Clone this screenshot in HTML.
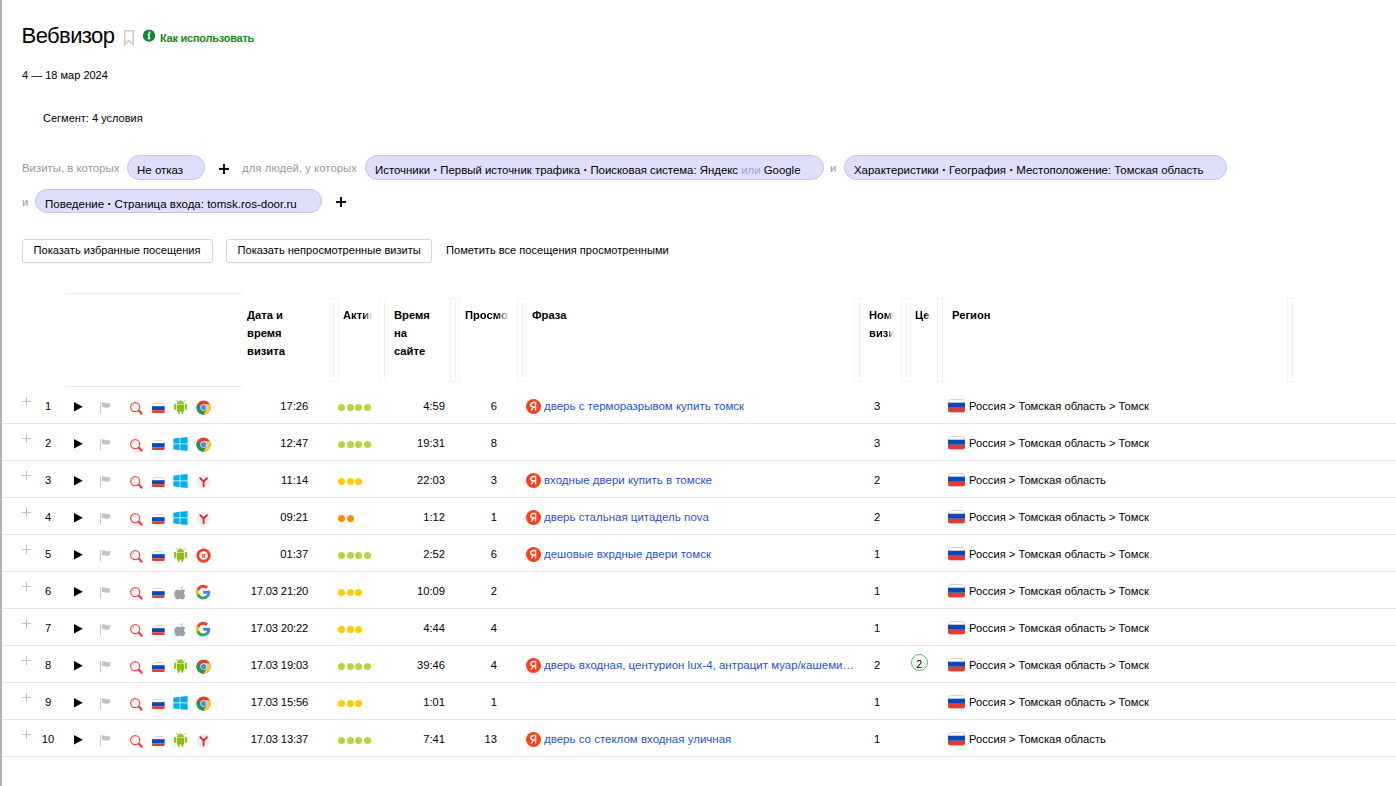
<!DOCTYPE html><html><head><meta charset="utf-8"><title>Вебвизор</title><style>
*{box-sizing:border-box}
html,body{margin:0;padding:0;background:#fff;width:1396px;height:786px;overflow:hidden;font-family:"Liberation Sans",sans-serif;color:#000}
.a{position:absolute;white-space:nowrap}
.lb{position:absolute;left:0;top:0;width:2px;height:786px;background:#b4b4b4}
.t{font-size:11px;line-height:14px}
.gray{color:#999}
.pill{position:absolute;height:25px;border-radius:13px;background:#dfdffc;border:1px solid #c3c3ec;font-size:11.5px;line-height:28.5px;padding-left:9px;white-space:nowrap;color:#000}
.plus{position:absolute;width:10px;height:10px}
.plus:before{content:"";position:absolute;left:0;top:4px;width:10px;height:2px;background:#111}
.plus:after{content:"";position:absolute;left:4px;top:0;width:2px;height:10px;background:#111}
.btn{position:absolute;height:24px;border:1px solid #d4d4d4;border-radius:3px;background:#fff;font-size:11.1px;line-height:21px;padding-left:10.5px;white-space:nowrap;box-shadow:0 1px 0 rgba(0,0,0,0.03)}
.hd{position:absolute;font-size:11.2px;font-weight:bold;line-height:18px;overflow:hidden}
.fade{-webkit-mask-image:linear-gradient(to right,#000 70%,transparent 100%);mask-image:linear-gradient(to right,#000 70%,transparent 100%)}
.rz{position:absolute;top:298px;width:10px;height:84px}
.rz .o{position:absolute;top:0;height:84px;width:1px;background:#f3f3f3}
.rz .h{position:absolute;height:1px;width:9px;background:#f3f3f3}
.rz .i{position:absolute;top:4px;left:5px;width:1px;height:76px;background:#ececec}
.hl{position:absolute;height:1px;background:#e6e6e6}
.c{position:absolute;font-size:11.2px;line-height:14px;white-space:nowrap}
.ic{position:absolute}
.ic svg{display:block}
.dot{position:absolute;width:7px;height:7px;border-radius:50%}
.b{font-size:8px;padding:0 0.6px;vertical-align:1.8px}
.ph{position:absolute;font-size:11.5px;line-height:14px;color:#1f52d4;white-space:nowrap;overflow:hidden;text-overflow:ellipsis}
</style></head><body>
<div class="lb"></div>
<div class="a" style="left:21.6px;top:24px;font-size:22px;line-height:24px;letter-spacing:-0.6px">Вебвизор</div>
<svg class="a" style="left:123px;top:29px" width="12" height="17" viewBox="0 0 12 17"><path d="M1.75 1.75 L10.25 1.75 L10.25 15.4 L6 11.6 L1.75 15.4 Z" fill="none" stroke="#cccccc" stroke-width="1.6" stroke-linejoin="miter"/></svg>
<svg class="a" style="left:142px;top:29px" width="14" height="14" viewBox="0 0 14 14"><circle cx="7" cy="6.6" r="6.2" fill="#0b8a32"/><circle cx="7.6" cy="3.5" r="1" fill="#fff"/><path d="M5.4 5.6 L7.5 5.3 L6.4 9.2 C6.2 10 6.9 10.1 8.3 8.9" stroke="#fff" stroke-width="1.5" fill="none" stroke-linejoin="round"/></svg>
<div class="a" style="left:160px;top:31px;font-size:11px;line-height:14px;font-weight:bold;color:#138a19;letter-spacing:-0.25px">Как использовать</div>
<div class="a t" style="left:22px;top:68px">4 — 18 мар 2024</div>
<div class="a t" style="left:43px;top:111px">Сегмент: 4 условия</div>
<div class="a gray" style="left:22px;top:161px;font-size:11.4px;line-height:14px">Визиты, в которых</div>
<div class="pill" style="left:127px;top:155px;width:78px">Не отказ</div>
<div class="plus" style="left:219px;top:164px"></div>
<div class="a gray" style="left:242px;top:161px;font-size:11.4px;line-height:14px">для людей, у которых</div>
<div class="pill" style="left:365px;top:155px;width:459px;font-size:11.4px">Источники <span class="b">•</span> Первый источник трафика <span class="b">•</span> Поисковая система: Яндекс <span style="color:#a3a3d6">или</span> Google</div>
<div class="a gray" style="left:830px;top:161px;font-size:11.4px;line-height:14px">и</div>
<div class="pill" style="left:844px;top:155px;width:383px;font-size:11.43px">Характеристики <span class="b">•</span> География <span class="b">•</span> Местоположение: Томская область</div>
<div class="a gray" style="left:22px;top:195px;font-size:11.4px;line-height:14px">и</div>
<div class="pill" style="left:35px;top:189px;width:287px;height:24px;line-height:27.5px">Поведение <span class="b">•</span> Страница входа: tomsk.ros-door.ru</div>
<div class="plus" style="left:336px;top:197px"></div>
<div class="btn" style="left:22px;top:239px;width:191px">Показать избранные посещения</div>
<div class="btn" style="left:226px;top:239px;width:206px">Показать непросмотренные визиты</div>
<div class="a" style="left:446px;top:243px;font-size:11.1px;line-height:14px">Пометить все посещения просмотренными</div>
<div class="hl" style="left:66px;top:293px;width:176px;background:#ebebeb"></div>
<div class="hl" style="left:66px;top:386px;width:176px;background:#e6e6e6"></div>
<div class="hd" style="left:247px;top:306px;width:80px">Дата и<br>время<br>визита</div>
<div class="hd fade" style="left:343px;top:306px;width:29px">Активность</div>
<div class="hd" style="left:394px;top:306px;width:55px">Время<br>на<br>сайте</div>
<div class="hd fade" style="left:465px;top:306px;width:45px">Просмотры</div>
<div class="hd" style="left:532px;top:306px;width:300px">Фраза</div>
<div class="hd fade" style="left:869px;top:306px;width:24.5px">Номер<br>визита</div>
<div class="hd fade" style="left:915px;top:306px;width:15.5px">Цели</div>
<div class="hd" style="left:952px;top:306px;width:300px">Регион</div>
<div class="rz" style="left:329px"><div class="o" style="left:9px"></div><div class="h" style="left:0;top:0"></div><div class="h" style="left:0;top:83px"></div><div class="i" style="left:4.4px"></div></div>
<div class="rz" style="left:379px"><div class="o" style="left:0"></div><div class="h" style="left:0;top:0"></div><div class="h" style="left:0;top:83px"></div><div class="i" style="left:5px"></div></div>
<div class="rz" style="left:450px"><div class="o" style="left:0"></div><div class="o" style="left:9px"></div><div class="h" style="left:0;top:0"></div><div class="h" style="left:0;top:83px"></div><div class="i" style="left:5px"></div></div>
<div class="rz" style="left:517px"><div class="o" style="left:0"></div><div class="h" style="left:0;top:0"></div><div class="h" style="left:0;top:83px"></div><div class="i" style="left:5px"></div></div>
<div class="rz" style="left:854px"><div class="o" style="left:0"></div><div class="h" style="left:0;top:0"></div><div class="h" style="left:0;top:83px"></div><div class="i" style="left:5px"></div></div>
<div class="rz" style="left:901px"><div class="o" style="left:0"></div><div class="o" style="left:9px"></div><div class="h" style="left:0;top:0"></div><div class="h" style="left:0;top:83px"></div><div class="i" style="left:5px"></div></div>
<div class="rz" style="left:937px"><div class="o" style="left:0"></div><div class="h" style="left:0;top:0"></div><div class="h" style="left:0;top:83px"></div><div class="i" style="left:5px"></div></div>
<div class="rz" style="left:1287px"><div class="o" style="left:0"></div><div class="h" style="left:0;top:0"></div><div class="h" style="left:0;top:83px"></div><div class="i" style="left:5px"></div></div>
<div class="hl" style="left:2px;top:423px;width:1394px"></div>
<svg class="ic" style="left:22px;top:397px" width="9" height="9" viewBox="0 0 9 9"><path d="M4.5 0 V9 M0 4.5 H9" stroke="#c2c2c2" stroke-width="1"/></svg>
<div class="c" style="left:38px;top:399px;width:20px;text-align:center">1</div>
<svg class="ic" style="left:74px;top:402px" width="9" height="10" viewBox="0 0 9 10"><path d="M0 0 L8.8 4.7 L0 9.4 Z" fill="#000"/></svg>
<svg class="ic" style="left:100px;top:402px" width="11" height="12" viewBox="0 0 11 12"><path d="M0.5 0 V11.6" stroke="#c8c8c8" stroke-width="1"/><path d="M1.9 0.7 C3.2 -0.1 4.6 0.6 6.1 1.0 C7.6 1.4 8.6 0.9 10.2 0.9 V5.2 C8.6 5.2 7.6 6.2 6.1 5.8 C4.6 5.4 3.2 4.9 1.9 5.2 Z" fill="#c4c4c4"/></svg>
<div class="ic" style="left:129px;top:400.5px"><svg width="16" height="16" viewBox="0 0 16 16"><circle cx="6.2" cy="6.1" r="4.55" fill="none" stroke="#ff4040" stroke-width="1.2"/><path d="M3.6 5.3 C3.8 4.6 4.2 4.1 4.9 3.8" stroke="#ff6060" stroke-width="0.8" fill="none"/><path d="M10.3 10.2 L12.5 12.5" stroke="#ff4040" stroke-width="2.5" stroke-linecap="round"/></svg></div>
<div class="ic" style="left:152.1px;top:402.7px"><svg width="12.8" height="10.2" viewBox="0 0 12.8 10.2"><defs><clipPath id="fc12"><rect x="0" y="0" width="12.8" height="10.2" rx="2"/></clipPath></defs><g clip-path="url(#fc12)"><rect x="0" y="0" width="12.8" height="10.2" fill="#ffffff"/><rect x="0.5" y="0.5" width="11.8" height="9.2" rx="2" fill="none" stroke="#d6d6d6" stroke-width="1"/><rect x="0" y="3.2" width="12.8" height="4.1" fill="#0c47b7"/><rect x="0" y="7.3" width="12.8" height="2.8999999999999995" fill="#e53b30"/></g></svg></div>
<div class="ic" style="left:174px;top:400px"><svg width="14" height="15" viewBox="0 0 14 15"><path d="M2.2 0.3 L3.9 1.4 M11.8 0.3 L10.1 1.4" stroke="#9bcf3a" stroke-width="0.9"/><path d="M3 4.1 C3 1.9 4.8 0.6 6.5 0.6 C8.2 0.6 10 1.9 10 4.1 Z" fill="#8cc41a"/><rect x="3" y="4.6" width="7" height="7" rx="0.6" fill="#86c20c"/><rect x="0.1" y="3.8" width="2.2" height="6.2" rx="1" fill="#8cc41a"/><rect x="10.8" y="3.8" width="2.2" height="6.2" rx="1" fill="#8cc41a"/><rect x="3.8" y="10" width="1.8" height="4" rx="0.9" fill="#80c000"/><rect x="7.4" y="10" width="1.8" height="4" rx="0.9" fill="#80c000"/><circle cx="5" cy="2.6" r="0.45" fill="#d8f0b0"/><circle cx="8" cy="2.6" r="0.45" fill="#d8f0b0"/></svg></div>
<div class="ic" style="left:195.5px;top:399.5px"><svg width="15.2" height="15.2" viewBox="0 0 16 16"><circle cx="8" cy="8" r="7.5" fill="#db4437"/><path d="M8 4.55 L14.66 4.55 A7.5 7.5 0 0 1 7.66 15.49 L10.99 9.725 L8 8 Z" fill="#fdc837"/><path d="M10.99 9.725 L7.66 15.49 A7.5 7.5 0 0 1 1.68 3.955 L5.01 9.725 L8 8 Z" fill="#179c53"/><circle cx="8" cy="8" r="3.45" fill="#f4f4f4"/><circle cx="8" cy="8" r="2.75" fill="#4a8af4"/></svg></div>
<div class="c" style="left:230px;top:399px;width:78.2px;text-align:right;">17:26</div>
<div class="dot" style="left:338.0px;top:404px;background:#bfd23b"></div>
<div class="dot" style="left:346.6px;top:404px;background:#bfd23b"></div>
<div class="dot" style="left:355.2px;top:404px;background:#bfd23b"></div>
<div class="dot" style="left:363.8px;top:404px;background:#bfd23b"></div>
<div class="c" style="left:395px;top:399px;width:50px;text-align:right">4:59</div>
<div class="c" style="left:470px;top:399px;width:27px;text-align:right">6</div>
<div class="ic" style="left:526px;top:398.6px"><svg width="15" height="15" viewBox="0 0 15 15"><circle cx="7.5" cy="7.5" r="7.5" fill="#fc3f1d"/><path d="M9.55 11.5 V3.5 H7.7 C5.9 3.5 4.75 4.5 4.75 5.85 C4.75 7.2 5.8 7.95 7.4 7.95 H9.55 M7.4 7.95 L5.3 11.5" stroke="#fff" stroke-width="1.4" fill="none"/></svg></div>
<div class="ph" style="left:544px;top:399px">дверь с терморазрывом купить томск</div>
<div class="c" style="left:874px;top:399px">3</div>
<div class="ic" style="left:948px;top:399.2px"><svg width="17" height="13.6" viewBox="0 0 17 13.6"><defs><clipPath id="fc17"><rect x="0" y="0" width="17" height="13.6" rx="2.5"/></clipPath></defs><g clip-path="url(#fc17)"><rect x="0" y="0" width="17" height="13.6" fill="#ffffff"/><rect x="0.5" y="0.5" width="16" height="12.6" rx="2.5" fill="none" stroke="#d6d6d6" stroke-width="1"/><rect x="0" y="3.7" width="17" height="5.1000000000000005" fill="#0c47b7"/><rect x="0" y="8.8" width="17" height="4.799999999999999" fill="#e53b30"/></g></svg></div>
<div class="c" style="left:969px;top:399px">Россия &gt; Томская область &gt; Томск</div>
<div class="hl" style="left:2px;top:460px;width:1394px"></div>
<svg class="ic" style="left:22px;top:434px" width="9" height="9" viewBox="0 0 9 9"><path d="M4.5 0 V9 M0 4.5 H9" stroke="#c2c2c2" stroke-width="1"/></svg>
<div class="c" style="left:38px;top:436px;width:20px;text-align:center">2</div>
<svg class="ic" style="left:74px;top:439px" width="9" height="10" viewBox="0 0 9 10"><path d="M0 0 L8.8 4.7 L0 9.4 Z" fill="#000"/></svg>
<svg class="ic" style="left:100px;top:439px" width="11" height="12" viewBox="0 0 11 12"><path d="M0.5 0 V11.6" stroke="#c8c8c8" stroke-width="1"/><path d="M1.9 0.7 C3.2 -0.1 4.6 0.6 6.1 1.0 C7.6 1.4 8.6 0.9 10.2 0.9 V5.2 C8.6 5.2 7.6 6.2 6.1 5.8 C4.6 5.4 3.2 4.9 1.9 5.2 Z" fill="#c4c4c4"/></svg>
<div class="ic" style="left:129px;top:437.5px"><svg width="16" height="16" viewBox="0 0 16 16"><circle cx="6.2" cy="6.1" r="4.55" fill="none" stroke="#ff4040" stroke-width="1.2"/><path d="M3.6 5.3 C3.8 4.6 4.2 4.1 4.9 3.8" stroke="#ff6060" stroke-width="0.8" fill="none"/><path d="M10.3 10.2 L12.5 12.5" stroke="#ff4040" stroke-width="2.5" stroke-linecap="round"/></svg></div>
<div class="ic" style="left:152.1px;top:439.7px"><svg width="12.8" height="10.2" viewBox="0 0 12.8 10.2"><defs><clipPath id="fc12"><rect x="0" y="0" width="12.8" height="10.2" rx="2"/></clipPath></defs><g clip-path="url(#fc12)"><rect x="0" y="0" width="12.8" height="10.2" fill="#ffffff"/><rect x="0.5" y="0.5" width="11.8" height="9.2" rx="2" fill="none" stroke="#d6d6d6" stroke-width="1"/><rect x="0" y="3.2" width="12.8" height="4.1" fill="#0c47b7"/><rect x="0" y="7.3" width="12.8" height="2.8999999999999995" fill="#e53b30"/></g></svg></div>
<div class="ic" style="left:173.3px;top:437px"><svg width="15" height="14" viewBox="0 0 15 14"><path d="M0.4 1.7 L6.6 0.8 L6.6 6.6 L0.4 6.6 Z M7.3 0.7 L14.6 0 L14.6 6.6 L7.3 6.6 Z M0.4 7.3 L6.6 7.3 L6.6 13.2 L0.4 12.3 Z M7.3 7.3 L14.6 7.3 L14.6 14 L7.3 13.3 Z" fill="#00adef"/></svg></div>
<div class="ic" style="left:195.5px;top:436.5px"><svg width="15.2" height="15.2" viewBox="0 0 16 16"><circle cx="8" cy="8" r="7.5" fill="#db4437"/><path d="M8 4.55 L14.66 4.55 A7.5 7.5 0 0 1 7.66 15.49 L10.99 9.725 L8 8 Z" fill="#fdc837"/><path d="M10.99 9.725 L7.66 15.49 A7.5 7.5 0 0 1 1.68 3.955 L5.01 9.725 L8 8 Z" fill="#179c53"/><circle cx="8" cy="8" r="3.45" fill="#f4f4f4"/><circle cx="8" cy="8" r="2.75" fill="#4a8af4"/></svg></div>
<div class="c" style="left:230px;top:436px;width:78.2px;text-align:right;">12:47</div>
<div class="dot" style="left:338.0px;top:441px;background:#bfd23b"></div>
<div class="dot" style="left:346.6px;top:441px;background:#bfd23b"></div>
<div class="dot" style="left:355.2px;top:441px;background:#bfd23b"></div>
<div class="dot" style="left:363.8px;top:441px;background:#bfd23b"></div>
<div class="c" style="left:395px;top:436px;width:50px;text-align:right">19:31</div>
<div class="c" style="left:470px;top:436px;width:27px;text-align:right">8</div>
<div class="c" style="left:874px;top:436px">3</div>
<div class="ic" style="left:948px;top:436.2px"><svg width="17" height="13.6" viewBox="0 0 17 13.6"><defs><clipPath id="fc17"><rect x="0" y="0" width="17" height="13.6" rx="2.5"/></clipPath></defs><g clip-path="url(#fc17)"><rect x="0" y="0" width="17" height="13.6" fill="#ffffff"/><rect x="0.5" y="0.5" width="16" height="12.6" rx="2.5" fill="none" stroke="#d6d6d6" stroke-width="1"/><rect x="0" y="3.7" width="17" height="5.1000000000000005" fill="#0c47b7"/><rect x="0" y="8.8" width="17" height="4.799999999999999" fill="#e53b30"/></g></svg></div>
<div class="c" style="left:969px;top:436px">Россия &gt; Томская область &gt; Томск</div>
<div class="hl" style="left:2px;top:497px;width:1394px"></div>
<svg class="ic" style="left:22px;top:471px" width="9" height="9" viewBox="0 0 9 9"><path d="M4.5 0 V9 M0 4.5 H9" stroke="#c2c2c2" stroke-width="1"/></svg>
<div class="c" style="left:38px;top:473px;width:20px;text-align:center">3</div>
<svg class="ic" style="left:74px;top:476px" width="9" height="10" viewBox="0 0 9 10"><path d="M0 0 L8.8 4.7 L0 9.4 Z" fill="#000"/></svg>
<svg class="ic" style="left:100px;top:476px" width="11" height="12" viewBox="0 0 11 12"><path d="M0.5 0 V11.6" stroke="#c8c8c8" stroke-width="1"/><path d="M1.9 0.7 C3.2 -0.1 4.6 0.6 6.1 1.0 C7.6 1.4 8.6 0.9 10.2 0.9 V5.2 C8.6 5.2 7.6 6.2 6.1 5.8 C4.6 5.4 3.2 4.9 1.9 5.2 Z" fill="#c4c4c4"/></svg>
<div class="ic" style="left:129px;top:474.5px"><svg width="16" height="16" viewBox="0 0 16 16"><circle cx="6.2" cy="6.1" r="4.55" fill="none" stroke="#ff4040" stroke-width="1.2"/><path d="M3.6 5.3 C3.8 4.6 4.2 4.1 4.9 3.8" stroke="#ff6060" stroke-width="0.8" fill="none"/><path d="M10.3 10.2 L12.5 12.5" stroke="#ff4040" stroke-width="2.5" stroke-linecap="round"/></svg></div>
<div class="ic" style="left:152.1px;top:476.7px"><svg width="12.8" height="10.2" viewBox="0 0 12.8 10.2"><defs><clipPath id="fc12"><rect x="0" y="0" width="12.8" height="10.2" rx="2"/></clipPath></defs><g clip-path="url(#fc12)"><rect x="0" y="0" width="12.8" height="10.2" fill="#ffffff"/><rect x="0.5" y="0.5" width="11.8" height="9.2" rx="2" fill="none" stroke="#d6d6d6" stroke-width="1"/><rect x="0" y="3.2" width="12.8" height="4.1" fill="#0c47b7"/><rect x="0" y="7.3" width="12.8" height="2.8999999999999995" fill="#e53b30"/></g></svg></div>
<div class="ic" style="left:173.3px;top:474px"><svg width="15" height="14" viewBox="0 0 15 14"><path d="M0.4 1.7 L6.6 0.8 L6.6 6.6 L0.4 6.6 Z M7.3 0.7 L14.6 0 L14.6 6.6 L7.3 6.6 Z M0.4 7.3 L6.6 7.3 L6.6 13.2 L0.4 12.3 Z M7.3 7.3 L14.6 7.3 L14.6 14 L7.3 13.3 Z" fill="#00adef"/></svg></div>
<div class="ic" style="left:195.5px;top:473.5px"><svg width="15.2" height="15.2" viewBox="0 0 16 16"><circle cx="8" cy="8" r="7.5" fill="#efefef"/><path d="M4.4 4.4 L8 8.1 L11.6 4.4 M8 8.1 L8 13" stroke="#ee1c25" stroke-width="1.9" fill="none" stroke-linecap="round" stroke-linejoin="round"/></svg></div>
<div class="c" style="left:230px;top:473px;width:78.2px;text-align:right;">11:14</div>
<div class="dot" style="left:338.0px;top:478px;background:#ffcc00"></div>
<div class="dot" style="left:346.6px;top:478px;background:#ffcc00"></div>
<div class="dot" style="left:355.2px;top:478px;background:#ffcc00"></div>
<div class="c" style="left:395px;top:473px;width:50px;text-align:right">22:03</div>
<div class="c" style="left:470px;top:473px;width:27px;text-align:right">3</div>
<div class="ic" style="left:526px;top:472.6px"><svg width="15" height="15" viewBox="0 0 15 15"><circle cx="7.5" cy="7.5" r="7.5" fill="#fc3f1d"/><path d="M9.55 11.5 V3.5 H7.7 C5.9 3.5 4.75 4.5 4.75 5.85 C4.75 7.2 5.8 7.95 7.4 7.95 H9.55 M7.4 7.95 L5.3 11.5" stroke="#fff" stroke-width="1.4" fill="none"/></svg></div>
<div class="ph" style="left:544px;top:473px">входные двери купить в томске</div>
<div class="c" style="left:874px;top:473px">2</div>
<div class="ic" style="left:948px;top:473.2px"><svg width="17" height="13.6" viewBox="0 0 17 13.6"><defs><clipPath id="fc17"><rect x="0" y="0" width="17" height="13.6" rx="2.5"/></clipPath></defs><g clip-path="url(#fc17)"><rect x="0" y="0" width="17" height="13.6" fill="#ffffff"/><rect x="0.5" y="0.5" width="16" height="12.6" rx="2.5" fill="none" stroke="#d6d6d6" stroke-width="1"/><rect x="0" y="3.7" width="17" height="5.1000000000000005" fill="#0c47b7"/><rect x="0" y="8.8" width="17" height="4.799999999999999" fill="#e53b30"/></g></svg></div>
<div class="c" style="left:969px;top:473px">Россия &gt; Томская область</div>
<div class="hl" style="left:2px;top:534px;width:1394px"></div>
<svg class="ic" style="left:22px;top:508px" width="9" height="9" viewBox="0 0 9 9"><path d="M4.5 0 V9 M0 4.5 H9" stroke="#c2c2c2" stroke-width="1"/></svg>
<div class="c" style="left:38px;top:510px;width:20px;text-align:center">4</div>
<svg class="ic" style="left:74px;top:513px" width="9" height="10" viewBox="0 0 9 10"><path d="M0 0 L8.8 4.7 L0 9.4 Z" fill="#000"/></svg>
<svg class="ic" style="left:100px;top:513px" width="11" height="12" viewBox="0 0 11 12"><path d="M0.5 0 V11.6" stroke="#c8c8c8" stroke-width="1"/><path d="M1.9 0.7 C3.2 -0.1 4.6 0.6 6.1 1.0 C7.6 1.4 8.6 0.9 10.2 0.9 V5.2 C8.6 5.2 7.6 6.2 6.1 5.8 C4.6 5.4 3.2 4.9 1.9 5.2 Z" fill="#c4c4c4"/></svg>
<div class="ic" style="left:129px;top:511.5px"><svg width="16" height="16" viewBox="0 0 16 16"><circle cx="6.2" cy="6.1" r="4.55" fill="none" stroke="#ff4040" stroke-width="1.2"/><path d="M3.6 5.3 C3.8 4.6 4.2 4.1 4.9 3.8" stroke="#ff6060" stroke-width="0.8" fill="none"/><path d="M10.3 10.2 L12.5 12.5" stroke="#ff4040" stroke-width="2.5" stroke-linecap="round"/></svg></div>
<div class="ic" style="left:152.1px;top:513.7px"><svg width="12.8" height="10.2" viewBox="0 0 12.8 10.2"><defs><clipPath id="fc12"><rect x="0" y="0" width="12.8" height="10.2" rx="2"/></clipPath></defs><g clip-path="url(#fc12)"><rect x="0" y="0" width="12.8" height="10.2" fill="#ffffff"/><rect x="0.5" y="0.5" width="11.8" height="9.2" rx="2" fill="none" stroke="#d6d6d6" stroke-width="1"/><rect x="0" y="3.2" width="12.8" height="4.1" fill="#0c47b7"/><rect x="0" y="7.3" width="12.8" height="2.8999999999999995" fill="#e53b30"/></g></svg></div>
<div class="ic" style="left:173.3px;top:511px"><svg width="15" height="14" viewBox="0 0 15 14"><path d="M0.4 1.7 L6.6 0.8 L6.6 6.6 L0.4 6.6 Z M7.3 0.7 L14.6 0 L14.6 6.6 L7.3 6.6 Z M0.4 7.3 L6.6 7.3 L6.6 13.2 L0.4 12.3 Z M7.3 7.3 L14.6 7.3 L14.6 14 L7.3 13.3 Z" fill="#00adef"/></svg></div>
<div class="ic" style="left:195.5px;top:510.5px"><svg width="15.2" height="15.2" viewBox="0 0 16 16"><circle cx="8" cy="8" r="7.5" fill="#efefef"/><path d="M4.4 4.4 L8 8.1 L11.6 4.4 M8 8.1 L8 13" stroke="#ee1c25" stroke-width="1.9" fill="none" stroke-linecap="round" stroke-linejoin="round"/></svg></div>
<div class="c" style="left:230px;top:510px;width:78.2px;text-align:right;">09:21</div>
<div class="dot" style="left:338.0px;top:515px;background:#ff8c00"></div>
<div class="dot" style="left:346.6px;top:515px;background:#ff8c00"></div>
<div class="c" style="left:395px;top:510px;width:50px;text-align:right">1:12</div>
<div class="c" style="left:470px;top:510px;width:27px;text-align:right">1</div>
<div class="ic" style="left:526px;top:509.6px"><svg width="15" height="15" viewBox="0 0 15 15"><circle cx="7.5" cy="7.5" r="7.5" fill="#fc3f1d"/><path d="M9.55 11.5 V3.5 H7.7 C5.9 3.5 4.75 4.5 4.75 5.85 C4.75 7.2 5.8 7.95 7.4 7.95 H9.55 M7.4 7.95 L5.3 11.5" stroke="#fff" stroke-width="1.4" fill="none"/></svg></div>
<div class="ph" style="left:544px;top:510px">дверь стальная цитадель nova</div>
<div class="c" style="left:874px;top:510px">2</div>
<div class="ic" style="left:948px;top:510.2px"><svg width="17" height="13.6" viewBox="0 0 17 13.6"><defs><clipPath id="fc17"><rect x="0" y="0" width="17" height="13.6" rx="2.5"/></clipPath></defs><g clip-path="url(#fc17)"><rect x="0" y="0" width="17" height="13.6" fill="#ffffff"/><rect x="0.5" y="0.5" width="16" height="12.6" rx="2.5" fill="none" stroke="#d6d6d6" stroke-width="1"/><rect x="0" y="3.7" width="17" height="5.1000000000000005" fill="#0c47b7"/><rect x="0" y="8.8" width="17" height="4.799999999999999" fill="#e53b30"/></g></svg></div>
<div class="c" style="left:969px;top:510px">Россия &gt; Томская область &gt; Томск</div>
<div class="hl" style="left:2px;top:571px;width:1394px"></div>
<svg class="ic" style="left:22px;top:545px" width="9" height="9" viewBox="0 0 9 9"><path d="M4.5 0 V9 M0 4.5 H9" stroke="#c2c2c2" stroke-width="1"/></svg>
<div class="c" style="left:38px;top:547px;width:20px;text-align:center">5</div>
<svg class="ic" style="left:74px;top:550px" width="9" height="10" viewBox="0 0 9 10"><path d="M0 0 L8.8 4.7 L0 9.4 Z" fill="#000"/></svg>
<svg class="ic" style="left:100px;top:550px" width="11" height="12" viewBox="0 0 11 12"><path d="M0.5 0 V11.6" stroke="#c8c8c8" stroke-width="1"/><path d="M1.9 0.7 C3.2 -0.1 4.6 0.6 6.1 1.0 C7.6 1.4 8.6 0.9 10.2 0.9 V5.2 C8.6 5.2 7.6 6.2 6.1 5.8 C4.6 5.4 3.2 4.9 1.9 5.2 Z" fill="#c4c4c4"/></svg>
<div class="ic" style="left:129px;top:548.5px"><svg width="16" height="16" viewBox="0 0 16 16"><circle cx="6.2" cy="6.1" r="4.55" fill="none" stroke="#ff4040" stroke-width="1.2"/><path d="M3.6 5.3 C3.8 4.6 4.2 4.1 4.9 3.8" stroke="#ff6060" stroke-width="0.8" fill="none"/><path d="M10.3 10.2 L12.5 12.5" stroke="#ff4040" stroke-width="2.5" stroke-linecap="round"/></svg></div>
<div class="ic" style="left:152.1px;top:550.7px"><svg width="12.8" height="10.2" viewBox="0 0 12.8 10.2"><defs><clipPath id="fc12"><rect x="0" y="0" width="12.8" height="10.2" rx="2"/></clipPath></defs><g clip-path="url(#fc12)"><rect x="0" y="0" width="12.8" height="10.2" fill="#ffffff"/><rect x="0.5" y="0.5" width="11.8" height="9.2" rx="2" fill="none" stroke="#d6d6d6" stroke-width="1"/><rect x="0" y="3.2" width="12.8" height="4.1" fill="#0c47b7"/><rect x="0" y="7.3" width="12.8" height="2.8999999999999995" fill="#e53b30"/></g></svg></div>
<div class="ic" style="left:174px;top:548px"><svg width="14" height="15" viewBox="0 0 14 15"><path d="M2.2 0.3 L3.9 1.4 M11.8 0.3 L10.1 1.4" stroke="#9bcf3a" stroke-width="0.9"/><path d="M3 4.1 C3 1.9 4.8 0.6 6.5 0.6 C8.2 0.6 10 1.9 10 4.1 Z" fill="#8cc41a"/><rect x="3" y="4.6" width="7" height="7" rx="0.6" fill="#86c20c"/><rect x="0.1" y="3.8" width="2.2" height="6.2" rx="1" fill="#8cc41a"/><rect x="10.8" y="3.8" width="2.2" height="6.2" rx="1" fill="#8cc41a"/><rect x="3.8" y="10" width="1.8" height="4" rx="0.9" fill="#80c000"/><rect x="7.4" y="10" width="1.8" height="4" rx="0.9" fill="#80c000"/><circle cx="5" cy="2.6" r="0.45" fill="#d8f0b0"/><circle cx="8" cy="2.6" r="0.45" fill="#d8f0b0"/></svg></div>
<div class="ic" style="left:195.5px;top:547.5px"><svg width="15.2" height="15.2" viewBox="0 0 16 16"><circle cx="8" cy="8" r="7.5" fill="#fc3f1d"/><circle cx="8" cy="8" r="4.5" fill="#fff"/><text x="8" y="10.6" text-anchor="middle" font-family="Liberation Sans" font-size="7" font-weight="bold" fill="#fc3f1d">я</text></svg></div>
<div class="c" style="left:230px;top:547px;width:78.2px;text-align:right;">01:37</div>
<div class="dot" style="left:338.0px;top:552px;background:#bfd23b"></div>
<div class="dot" style="left:346.6px;top:552px;background:#bfd23b"></div>
<div class="dot" style="left:355.2px;top:552px;background:#bfd23b"></div>
<div class="dot" style="left:363.8px;top:552px;background:#bfd23b"></div>
<div class="c" style="left:395px;top:547px;width:50px;text-align:right">2:52</div>
<div class="c" style="left:470px;top:547px;width:27px;text-align:right">6</div>
<div class="ic" style="left:526px;top:546.6px"><svg width="15" height="15" viewBox="0 0 15 15"><circle cx="7.5" cy="7.5" r="7.5" fill="#fc3f1d"/><path d="M9.55 11.5 V3.5 H7.7 C5.9 3.5 4.75 4.5 4.75 5.85 C4.75 7.2 5.8 7.95 7.4 7.95 H9.55 M7.4 7.95 L5.3 11.5" stroke="#fff" stroke-width="1.4" fill="none"/></svg></div>
<div class="ph" style="left:544px;top:547px">дешовые вхрдные двери томск</div>
<div class="c" style="left:874px;top:547px">1</div>
<div class="ic" style="left:948px;top:547.2px"><svg width="17" height="13.6" viewBox="0 0 17 13.6"><defs><clipPath id="fc17"><rect x="0" y="0" width="17" height="13.6" rx="2.5"/></clipPath></defs><g clip-path="url(#fc17)"><rect x="0" y="0" width="17" height="13.6" fill="#ffffff"/><rect x="0.5" y="0.5" width="16" height="12.6" rx="2.5" fill="none" stroke="#d6d6d6" stroke-width="1"/><rect x="0" y="3.7" width="17" height="5.1000000000000005" fill="#0c47b7"/><rect x="0" y="8.8" width="17" height="4.799999999999999" fill="#e53b30"/></g></svg></div>
<div class="c" style="left:969px;top:547px">Россия &gt; Томская область &gt; Томск</div>
<div class="hl" style="left:2px;top:608px;width:1394px"></div>
<svg class="ic" style="left:22px;top:582px" width="9" height="9" viewBox="0 0 9 9"><path d="M4.5 0 V9 M0 4.5 H9" stroke="#c2c2c2" stroke-width="1"/></svg>
<div class="c" style="left:38px;top:584px;width:20px;text-align:center">6</div>
<svg class="ic" style="left:74px;top:587px" width="9" height="10" viewBox="0 0 9 10"><path d="M0 0 L8.8 4.7 L0 9.4 Z" fill="#000"/></svg>
<svg class="ic" style="left:100px;top:587px" width="11" height="12" viewBox="0 0 11 12"><path d="M0.5 0 V11.6" stroke="#c8c8c8" stroke-width="1"/><path d="M1.9 0.7 C3.2 -0.1 4.6 0.6 6.1 1.0 C7.6 1.4 8.6 0.9 10.2 0.9 V5.2 C8.6 5.2 7.6 6.2 6.1 5.8 C4.6 5.4 3.2 4.9 1.9 5.2 Z" fill="#c4c4c4"/></svg>
<div class="ic" style="left:129px;top:585.5px"><svg width="16" height="16" viewBox="0 0 16 16"><circle cx="6.2" cy="6.1" r="4.55" fill="none" stroke="#ff4040" stroke-width="1.2"/><path d="M3.6 5.3 C3.8 4.6 4.2 4.1 4.9 3.8" stroke="#ff6060" stroke-width="0.8" fill="none"/><path d="M10.3 10.2 L12.5 12.5" stroke="#ff4040" stroke-width="2.5" stroke-linecap="round"/></svg></div>
<div class="ic" style="left:152.1px;top:587.7px"><svg width="12.8" height="10.2" viewBox="0 0 12.8 10.2"><defs><clipPath id="fc12"><rect x="0" y="0" width="12.8" height="10.2" rx="2"/></clipPath></defs><g clip-path="url(#fc12)"><rect x="0" y="0" width="12.8" height="10.2" fill="#ffffff"/><rect x="0.5" y="0.5" width="11.8" height="9.2" rx="2" fill="none" stroke="#d6d6d6" stroke-width="1"/><rect x="0" y="3.2" width="12.8" height="4.1" fill="#0c47b7"/><rect x="0" y="7.3" width="12.8" height="2.8999999999999995" fill="#e53b30"/></g></svg></div>
<div class="ic" style="left:174.4px;top:586.3px"><svg width="12" height="15" viewBox="0 0 12 15"><path d="M8.6 0.3 C8.7 1.4 7.9 2.6 6.6 2.8 C6.5 1.7 7.4 0.5 8.6 0.3 Z" fill="#9aa1aa"/><path d="M6 4.2 C6.9 4.2 7.6 3.6 8.6 3.6 C9.5 3.6 10.5 4.1 11.1 5 C9.4 5.9 9.6 8.6 11.5 9.3 C11 10.9 9.9 13.4 8.6 13.4 C7.5 13.4 7.3 12.8 6 12.8 C4.7 12.8 4.4 13.4 3.4 13.4 C1.9 13.4 0.3 10.3 0.3 7.9 C0.3 5.1 2 3.7 3.5 3.7 C4.5 3.7 5.2 4.2 6 4.2 Z" fill="#9aa1aa"/></svg></div>
<div class="ic" style="left:195px;top:584px"><svg width="16.4" height="16.4" viewBox="0 0 16 16"><path d="M14.9 8.2 C14.9 7.7 14.85 7.2 14.75 6.7 L8 6.7 L8 9.4 L11.9 9.4 C11.7 10.3 11.2 11 10.4 11.5 L10.4 13.3 L12.7 13.3 C14.1 12 14.9 10.3 14.9 8.2 Z" fill="#4285f4"/><path d="M8 15.2 C9.9 15.2 11.5 14.6 12.7 13.3 L10.4 11.5 C9.8 11.9 9 12.2 8 12.2 C6.2 12.2 4.6 11 4.1 9.3 L1.7 9.3 L1.7 11.2 C2.9 13.6 5.3 15.2 8 15.2 Z" fill="#34a853"/><path d="M4.1 9.3 C3.9 8.9 3.8 8.4 3.8 8 C3.8 7.5 3.9 7.1 4.1 6.6 L4.1 4.8 L1.7 4.8 C1.2 5.7 0.9 6.8 0.9 8 C0.9 9.1 1.2 10.2 1.7 11.2 Z" fill="#fbbc05"/><path d="M8 3.7 C9.1 3.7 10.1 4.1 10.8 4.8 L12.8 2.8 C11.6 1.6 9.9 0.8 8 0.8 C5.3 0.8 2.9 2.4 1.7 4.8 L4.1 6.6 C4.6 5 6.2 3.7 8 3.7 Z" fill="#ea4335"/></svg></div>
<div class="c" style="left:230px;top:584px;width:78px;text-align:right;letter-spacing:-0.17px;">17.03 21:20</div>
<div class="dot" style="left:338.0px;top:589px;background:#ffcc00"></div>
<div class="dot" style="left:346.6px;top:589px;background:#ffcc00"></div>
<div class="dot" style="left:355.2px;top:589px;background:#ffcc00"></div>
<div class="c" style="left:395px;top:584px;width:50px;text-align:right">10:09</div>
<div class="c" style="left:470px;top:584px;width:27px;text-align:right">2</div>
<div class="c" style="left:874px;top:584px">1</div>
<div class="ic" style="left:948px;top:584.2px"><svg width="17" height="13.6" viewBox="0 0 17 13.6"><defs><clipPath id="fc17"><rect x="0" y="0" width="17" height="13.6" rx="2.5"/></clipPath></defs><g clip-path="url(#fc17)"><rect x="0" y="0" width="17" height="13.6" fill="#ffffff"/><rect x="0.5" y="0.5" width="16" height="12.6" rx="2.5" fill="none" stroke="#d6d6d6" stroke-width="1"/><rect x="0" y="3.7" width="17" height="5.1000000000000005" fill="#0c47b7"/><rect x="0" y="8.8" width="17" height="4.799999999999999" fill="#e53b30"/></g></svg></div>
<div class="c" style="left:969px;top:584px">Россия &gt; Томская область &gt; Томск</div>
<div class="hl" style="left:2px;top:645px;width:1394px"></div>
<svg class="ic" style="left:22px;top:619px" width="9" height="9" viewBox="0 0 9 9"><path d="M4.5 0 V9 M0 4.5 H9" stroke="#c2c2c2" stroke-width="1"/></svg>
<div class="c" style="left:38px;top:621px;width:20px;text-align:center">7</div>
<svg class="ic" style="left:74px;top:624px" width="9" height="10" viewBox="0 0 9 10"><path d="M0 0 L8.8 4.7 L0 9.4 Z" fill="#000"/></svg>
<svg class="ic" style="left:100px;top:624px" width="11" height="12" viewBox="0 0 11 12"><path d="M0.5 0 V11.6" stroke="#c8c8c8" stroke-width="1"/><path d="M1.9 0.7 C3.2 -0.1 4.6 0.6 6.1 1.0 C7.6 1.4 8.6 0.9 10.2 0.9 V5.2 C8.6 5.2 7.6 6.2 6.1 5.8 C4.6 5.4 3.2 4.9 1.9 5.2 Z" fill="#c4c4c4"/></svg>
<div class="ic" style="left:129px;top:622.5px"><svg width="16" height="16" viewBox="0 0 16 16"><circle cx="6.2" cy="6.1" r="4.55" fill="none" stroke="#ff4040" stroke-width="1.2"/><path d="M3.6 5.3 C3.8 4.6 4.2 4.1 4.9 3.8" stroke="#ff6060" stroke-width="0.8" fill="none"/><path d="M10.3 10.2 L12.5 12.5" stroke="#ff4040" stroke-width="2.5" stroke-linecap="round"/></svg></div>
<div class="ic" style="left:152.1px;top:624.7px"><svg width="12.8" height="10.2" viewBox="0 0 12.8 10.2"><defs><clipPath id="fc12"><rect x="0" y="0" width="12.8" height="10.2" rx="2"/></clipPath></defs><g clip-path="url(#fc12)"><rect x="0" y="0" width="12.8" height="10.2" fill="#ffffff"/><rect x="0.5" y="0.5" width="11.8" height="9.2" rx="2" fill="none" stroke="#d6d6d6" stroke-width="1"/><rect x="0" y="3.2" width="12.8" height="4.1" fill="#0c47b7"/><rect x="0" y="7.3" width="12.8" height="2.8999999999999995" fill="#e53b30"/></g></svg></div>
<div class="ic" style="left:174.4px;top:623.3px"><svg width="12" height="15" viewBox="0 0 12 15"><path d="M8.6 0.3 C8.7 1.4 7.9 2.6 6.6 2.8 C6.5 1.7 7.4 0.5 8.6 0.3 Z" fill="#9aa1aa"/><path d="M6 4.2 C6.9 4.2 7.6 3.6 8.6 3.6 C9.5 3.6 10.5 4.1 11.1 5 C9.4 5.9 9.6 8.6 11.5 9.3 C11 10.9 9.9 13.4 8.6 13.4 C7.5 13.4 7.3 12.8 6 12.8 C4.7 12.8 4.4 13.4 3.4 13.4 C1.9 13.4 0.3 10.3 0.3 7.9 C0.3 5.1 2 3.7 3.5 3.7 C4.5 3.7 5.2 4.2 6 4.2 Z" fill="#9aa1aa"/></svg></div>
<div class="ic" style="left:195px;top:621px"><svg width="16.4" height="16.4" viewBox="0 0 16 16"><path d="M14.9 8.2 C14.9 7.7 14.85 7.2 14.75 6.7 L8 6.7 L8 9.4 L11.9 9.4 C11.7 10.3 11.2 11 10.4 11.5 L10.4 13.3 L12.7 13.3 C14.1 12 14.9 10.3 14.9 8.2 Z" fill="#4285f4"/><path d="M8 15.2 C9.9 15.2 11.5 14.6 12.7 13.3 L10.4 11.5 C9.8 11.9 9 12.2 8 12.2 C6.2 12.2 4.6 11 4.1 9.3 L1.7 9.3 L1.7 11.2 C2.9 13.6 5.3 15.2 8 15.2 Z" fill="#34a853"/><path d="M4.1 9.3 C3.9 8.9 3.8 8.4 3.8 8 C3.8 7.5 3.9 7.1 4.1 6.6 L4.1 4.8 L1.7 4.8 C1.2 5.7 0.9 6.8 0.9 8 C0.9 9.1 1.2 10.2 1.7 11.2 Z" fill="#fbbc05"/><path d="M8 3.7 C9.1 3.7 10.1 4.1 10.8 4.8 L12.8 2.8 C11.6 1.6 9.9 0.8 8 0.8 C5.3 0.8 2.9 2.4 1.7 4.8 L4.1 6.6 C4.6 5 6.2 3.7 8 3.7 Z" fill="#ea4335"/></svg></div>
<div class="c" style="left:230px;top:621px;width:78px;text-align:right;letter-spacing:-0.17px;">17.03 20:22</div>
<div class="dot" style="left:338.0px;top:626px;background:#ffcc00"></div>
<div class="dot" style="left:346.6px;top:626px;background:#ffcc00"></div>
<div class="dot" style="left:355.2px;top:626px;background:#ffcc00"></div>
<div class="c" style="left:395px;top:621px;width:50px;text-align:right">4:44</div>
<div class="c" style="left:470px;top:621px;width:27px;text-align:right">4</div>
<div class="c" style="left:874px;top:621px">1</div>
<div class="ic" style="left:948px;top:621.2px"><svg width="17" height="13.6" viewBox="0 0 17 13.6"><defs><clipPath id="fc17"><rect x="0" y="0" width="17" height="13.6" rx="2.5"/></clipPath></defs><g clip-path="url(#fc17)"><rect x="0" y="0" width="17" height="13.6" fill="#ffffff"/><rect x="0.5" y="0.5" width="16" height="12.6" rx="2.5" fill="none" stroke="#d6d6d6" stroke-width="1"/><rect x="0" y="3.7" width="17" height="5.1000000000000005" fill="#0c47b7"/><rect x="0" y="8.8" width="17" height="4.799999999999999" fill="#e53b30"/></g></svg></div>
<div class="c" style="left:969px;top:621px">Россия &gt; Томская область &gt; Томск</div>
<div class="hl" style="left:2px;top:682px;width:1394px"></div>
<svg class="ic" style="left:22px;top:656px" width="9" height="9" viewBox="0 0 9 9"><path d="M4.5 0 V9 M0 4.5 H9" stroke="#c2c2c2" stroke-width="1"/></svg>
<div class="c" style="left:38px;top:658px;width:20px;text-align:center">8</div>
<svg class="ic" style="left:74px;top:661px" width="9" height="10" viewBox="0 0 9 10"><path d="M0 0 L8.8 4.7 L0 9.4 Z" fill="#000"/></svg>
<svg class="ic" style="left:100px;top:661px" width="11" height="12" viewBox="0 0 11 12"><path d="M0.5 0 V11.6" stroke="#c8c8c8" stroke-width="1"/><path d="M1.9 0.7 C3.2 -0.1 4.6 0.6 6.1 1.0 C7.6 1.4 8.6 0.9 10.2 0.9 V5.2 C8.6 5.2 7.6 6.2 6.1 5.8 C4.6 5.4 3.2 4.9 1.9 5.2 Z" fill="#c4c4c4"/></svg>
<div class="ic" style="left:129px;top:659.5px"><svg width="16" height="16" viewBox="0 0 16 16"><circle cx="6.2" cy="6.1" r="4.55" fill="none" stroke="#ff4040" stroke-width="1.2"/><path d="M3.6 5.3 C3.8 4.6 4.2 4.1 4.9 3.8" stroke="#ff6060" stroke-width="0.8" fill="none"/><path d="M10.3 10.2 L12.5 12.5" stroke="#ff4040" stroke-width="2.5" stroke-linecap="round"/></svg></div>
<div class="ic" style="left:152.1px;top:661.7px"><svg width="12.8" height="10.2" viewBox="0 0 12.8 10.2"><defs><clipPath id="fc12"><rect x="0" y="0" width="12.8" height="10.2" rx="2"/></clipPath></defs><g clip-path="url(#fc12)"><rect x="0" y="0" width="12.8" height="10.2" fill="#ffffff"/><rect x="0.5" y="0.5" width="11.8" height="9.2" rx="2" fill="none" stroke="#d6d6d6" stroke-width="1"/><rect x="0" y="3.2" width="12.8" height="4.1" fill="#0c47b7"/><rect x="0" y="7.3" width="12.8" height="2.8999999999999995" fill="#e53b30"/></g></svg></div>
<div class="ic" style="left:174px;top:659px"><svg width="14" height="15" viewBox="0 0 14 15"><path d="M2.2 0.3 L3.9 1.4 M11.8 0.3 L10.1 1.4" stroke="#9bcf3a" stroke-width="0.9"/><path d="M3 4.1 C3 1.9 4.8 0.6 6.5 0.6 C8.2 0.6 10 1.9 10 4.1 Z" fill="#8cc41a"/><rect x="3" y="4.6" width="7" height="7" rx="0.6" fill="#86c20c"/><rect x="0.1" y="3.8" width="2.2" height="6.2" rx="1" fill="#8cc41a"/><rect x="10.8" y="3.8" width="2.2" height="6.2" rx="1" fill="#8cc41a"/><rect x="3.8" y="10" width="1.8" height="4" rx="0.9" fill="#80c000"/><rect x="7.4" y="10" width="1.8" height="4" rx="0.9" fill="#80c000"/><circle cx="5" cy="2.6" r="0.45" fill="#d8f0b0"/><circle cx="8" cy="2.6" r="0.45" fill="#d8f0b0"/></svg></div>
<div class="ic" style="left:195.5px;top:658.5px"><svg width="15.2" height="15.2" viewBox="0 0 16 16"><circle cx="8" cy="8" r="7.5" fill="#db4437"/><path d="M8 4.55 L14.66 4.55 A7.5 7.5 0 0 1 7.66 15.49 L10.99 9.725 L8 8 Z" fill="#fdc837"/><path d="M10.99 9.725 L7.66 15.49 A7.5 7.5 0 0 1 1.68 3.955 L5.01 9.725 L8 8 Z" fill="#179c53"/><circle cx="8" cy="8" r="3.45" fill="#f4f4f4"/><circle cx="8" cy="8" r="2.75" fill="#4a8af4"/></svg></div>
<div class="c" style="left:230px;top:658px;width:78px;text-align:right;letter-spacing:-0.17px;">17.03 19:03</div>
<div class="dot" style="left:338.0px;top:663px;background:#bfd23b"></div>
<div class="dot" style="left:346.6px;top:663px;background:#bfd23b"></div>
<div class="dot" style="left:355.2px;top:663px;background:#bfd23b"></div>
<div class="dot" style="left:363.8px;top:663px;background:#bfd23b"></div>
<div class="c" style="left:395px;top:658px;width:50px;text-align:right">39:46</div>
<div class="c" style="left:470px;top:658px;width:27px;text-align:right">4</div>
<div class="ic" style="left:526px;top:657.6px"><svg width="15" height="15" viewBox="0 0 15 15"><circle cx="7.5" cy="7.5" r="7.5" fill="#fc3f1d"/><path d="M9.55 11.5 V3.5 H7.7 C5.9 3.5 4.75 4.5 4.75 5.85 C4.75 7.2 5.8 7.95 7.4 7.95 H9.55 M7.4 7.95 L5.3 11.5" stroke="#fff" stroke-width="1.4" fill="none"/></svg></div>
<div class="ph" style="left:544px;top:658px">дверь входная, центурион lux-4, антрацит муар/кашеми…</div>
<div class="c" style="left:874px;top:658px">2</div>
<div class="ic" style="left:910.5px;top:653.8px;width:17.5px;height:17.5px;border:1.5px solid #53b953;border-radius:50%;font-size:10.6px;line-height:17.4px;padding-top:1px;text-align:center">2</div>
<div class="ic" style="left:948px;top:658.2px"><svg width="17" height="13.6" viewBox="0 0 17 13.6"><defs><clipPath id="fc17"><rect x="0" y="0" width="17" height="13.6" rx="2.5"/></clipPath></defs><g clip-path="url(#fc17)"><rect x="0" y="0" width="17" height="13.6" fill="#ffffff"/><rect x="0.5" y="0.5" width="16" height="12.6" rx="2.5" fill="none" stroke="#d6d6d6" stroke-width="1"/><rect x="0" y="3.7" width="17" height="5.1000000000000005" fill="#0c47b7"/><rect x="0" y="8.8" width="17" height="4.799999999999999" fill="#e53b30"/></g></svg></div>
<div class="c" style="left:969px;top:658px">Россия &gt; Томская область &gt; Томск</div>
<div class="hl" style="left:2px;top:719px;width:1394px"></div>
<svg class="ic" style="left:22px;top:693px" width="9" height="9" viewBox="0 0 9 9"><path d="M4.5 0 V9 M0 4.5 H9" stroke="#c2c2c2" stroke-width="1"/></svg>
<div class="c" style="left:38px;top:695px;width:20px;text-align:center">9</div>
<svg class="ic" style="left:74px;top:698px" width="9" height="10" viewBox="0 0 9 10"><path d="M0 0 L8.8 4.7 L0 9.4 Z" fill="#000"/></svg>
<svg class="ic" style="left:100px;top:698px" width="11" height="12" viewBox="0 0 11 12"><path d="M0.5 0 V11.6" stroke="#c8c8c8" stroke-width="1"/><path d="M1.9 0.7 C3.2 -0.1 4.6 0.6 6.1 1.0 C7.6 1.4 8.6 0.9 10.2 0.9 V5.2 C8.6 5.2 7.6 6.2 6.1 5.8 C4.6 5.4 3.2 4.9 1.9 5.2 Z" fill="#c4c4c4"/></svg>
<div class="ic" style="left:129px;top:696.5px"><svg width="16" height="16" viewBox="0 0 16 16"><circle cx="6.2" cy="6.1" r="4.55" fill="none" stroke="#ff4040" stroke-width="1.2"/><path d="M3.6 5.3 C3.8 4.6 4.2 4.1 4.9 3.8" stroke="#ff6060" stroke-width="0.8" fill="none"/><path d="M10.3 10.2 L12.5 12.5" stroke="#ff4040" stroke-width="2.5" stroke-linecap="round"/></svg></div>
<div class="ic" style="left:152.1px;top:698.7px"><svg width="12.8" height="10.2" viewBox="0 0 12.8 10.2"><defs><clipPath id="fc12"><rect x="0" y="0" width="12.8" height="10.2" rx="2"/></clipPath></defs><g clip-path="url(#fc12)"><rect x="0" y="0" width="12.8" height="10.2" fill="#ffffff"/><rect x="0.5" y="0.5" width="11.8" height="9.2" rx="2" fill="none" stroke="#d6d6d6" stroke-width="1"/><rect x="0" y="3.2" width="12.8" height="4.1" fill="#0c47b7"/><rect x="0" y="7.3" width="12.8" height="2.8999999999999995" fill="#e53b30"/></g></svg></div>
<div class="ic" style="left:173.3px;top:696px"><svg width="15" height="14" viewBox="0 0 15 14"><path d="M0.4 1.7 L6.6 0.8 L6.6 6.6 L0.4 6.6 Z M7.3 0.7 L14.6 0 L14.6 6.6 L7.3 6.6 Z M0.4 7.3 L6.6 7.3 L6.6 13.2 L0.4 12.3 Z M7.3 7.3 L14.6 7.3 L14.6 14 L7.3 13.3 Z" fill="#00adef"/></svg></div>
<div class="ic" style="left:195.5px;top:695.5px"><svg width="15.2" height="15.2" viewBox="0 0 16 16"><circle cx="8" cy="8" r="7.5" fill="#db4437"/><path d="M8 4.55 L14.66 4.55 A7.5 7.5 0 0 1 7.66 15.49 L10.99 9.725 L8 8 Z" fill="#fdc837"/><path d="M10.99 9.725 L7.66 15.49 A7.5 7.5 0 0 1 1.68 3.955 L5.01 9.725 L8 8 Z" fill="#179c53"/><circle cx="8" cy="8" r="3.45" fill="#f4f4f4"/><circle cx="8" cy="8" r="2.75" fill="#4a8af4"/></svg></div>
<div class="c" style="left:230px;top:695px;width:78px;text-align:right;letter-spacing:-0.17px;">17.03 15:56</div>
<div class="dot" style="left:338.0px;top:700px;background:#ffcc00"></div>
<div class="dot" style="left:346.6px;top:700px;background:#ffcc00"></div>
<div class="dot" style="left:355.2px;top:700px;background:#ffcc00"></div>
<div class="c" style="left:395px;top:695px;width:50px;text-align:right">1:01</div>
<div class="c" style="left:470px;top:695px;width:27px;text-align:right">1</div>
<div class="c" style="left:874px;top:695px">1</div>
<div class="ic" style="left:948px;top:695.2px"><svg width="17" height="13.6" viewBox="0 0 17 13.6"><defs><clipPath id="fc17"><rect x="0" y="0" width="17" height="13.6" rx="2.5"/></clipPath></defs><g clip-path="url(#fc17)"><rect x="0" y="0" width="17" height="13.6" fill="#ffffff"/><rect x="0.5" y="0.5" width="16" height="12.6" rx="2.5" fill="none" stroke="#d6d6d6" stroke-width="1"/><rect x="0" y="3.7" width="17" height="5.1000000000000005" fill="#0c47b7"/><rect x="0" y="8.8" width="17" height="4.799999999999999" fill="#e53b30"/></g></svg></div>
<div class="c" style="left:969px;top:695px">Россия &gt; Томская область &gt; Томск</div>
<div class="hl" style="left:2px;top:756px;width:1394px"></div>
<svg class="ic" style="left:22px;top:730px" width="9" height="9" viewBox="0 0 9 9"><path d="M4.5 0 V9 M0 4.5 H9" stroke="#c2c2c2" stroke-width="1"/></svg>
<div class="c" style="left:38px;top:732px;width:20px;text-align:center">10</div>
<svg class="ic" style="left:74px;top:735px" width="9" height="10" viewBox="0 0 9 10"><path d="M0 0 L8.8 4.7 L0 9.4 Z" fill="#000"/></svg>
<svg class="ic" style="left:100px;top:735px" width="11" height="12" viewBox="0 0 11 12"><path d="M0.5 0 V11.6" stroke="#c8c8c8" stroke-width="1"/><path d="M1.9 0.7 C3.2 -0.1 4.6 0.6 6.1 1.0 C7.6 1.4 8.6 0.9 10.2 0.9 V5.2 C8.6 5.2 7.6 6.2 6.1 5.8 C4.6 5.4 3.2 4.9 1.9 5.2 Z" fill="#c4c4c4"/></svg>
<div class="ic" style="left:129px;top:733.5px"><svg width="16" height="16" viewBox="0 0 16 16"><circle cx="6.2" cy="6.1" r="4.55" fill="none" stroke="#ff4040" stroke-width="1.2"/><path d="M3.6 5.3 C3.8 4.6 4.2 4.1 4.9 3.8" stroke="#ff6060" stroke-width="0.8" fill="none"/><path d="M10.3 10.2 L12.5 12.5" stroke="#ff4040" stroke-width="2.5" stroke-linecap="round"/></svg></div>
<div class="ic" style="left:152.1px;top:735.7px"><svg width="12.8" height="10.2" viewBox="0 0 12.8 10.2"><defs><clipPath id="fc12"><rect x="0" y="0" width="12.8" height="10.2" rx="2"/></clipPath></defs><g clip-path="url(#fc12)"><rect x="0" y="0" width="12.8" height="10.2" fill="#ffffff"/><rect x="0.5" y="0.5" width="11.8" height="9.2" rx="2" fill="none" stroke="#d6d6d6" stroke-width="1"/><rect x="0" y="3.2" width="12.8" height="4.1" fill="#0c47b7"/><rect x="0" y="7.3" width="12.8" height="2.8999999999999995" fill="#e53b30"/></g></svg></div>
<div class="ic" style="left:174px;top:733px"><svg width="14" height="15" viewBox="0 0 14 15"><path d="M2.2 0.3 L3.9 1.4 M11.8 0.3 L10.1 1.4" stroke="#9bcf3a" stroke-width="0.9"/><path d="M3 4.1 C3 1.9 4.8 0.6 6.5 0.6 C8.2 0.6 10 1.9 10 4.1 Z" fill="#8cc41a"/><rect x="3" y="4.6" width="7" height="7" rx="0.6" fill="#86c20c"/><rect x="0.1" y="3.8" width="2.2" height="6.2" rx="1" fill="#8cc41a"/><rect x="10.8" y="3.8" width="2.2" height="6.2" rx="1" fill="#8cc41a"/><rect x="3.8" y="10" width="1.8" height="4" rx="0.9" fill="#80c000"/><rect x="7.4" y="10" width="1.8" height="4" rx="0.9" fill="#80c000"/><circle cx="5" cy="2.6" r="0.45" fill="#d8f0b0"/><circle cx="8" cy="2.6" r="0.45" fill="#d8f0b0"/></svg></div>
<div class="ic" style="left:195.5px;top:732.5px"><svg width="15.2" height="15.2" viewBox="0 0 16 16"><circle cx="8" cy="8" r="7.5" fill="#efefef"/><path d="M4.4 4.4 L8 8.1 L11.6 4.4 M8 8.1 L8 13" stroke="#ee1c25" stroke-width="1.9" fill="none" stroke-linecap="round" stroke-linejoin="round"/></svg></div>
<div class="c" style="left:230px;top:732px;width:78px;text-align:right;letter-spacing:-0.17px;">17.03 13:37</div>
<div class="dot" style="left:338.0px;top:737px;background:#bfd23b"></div>
<div class="dot" style="left:346.6px;top:737px;background:#bfd23b"></div>
<div class="dot" style="left:355.2px;top:737px;background:#bfd23b"></div>
<div class="dot" style="left:363.8px;top:737px;background:#bfd23b"></div>
<div class="c" style="left:395px;top:732px;width:50px;text-align:right">7:41</div>
<div class="c" style="left:470px;top:732px;width:27px;text-align:right">13</div>
<div class="ic" style="left:526px;top:731.6px"><svg width="15" height="15" viewBox="0 0 15 15"><circle cx="7.5" cy="7.5" r="7.5" fill="#fc3f1d"/><path d="M9.55 11.5 V3.5 H7.7 C5.9 3.5 4.75 4.5 4.75 5.85 C4.75 7.2 5.8 7.95 7.4 7.95 H9.55 M7.4 7.95 L5.3 11.5" stroke="#fff" stroke-width="1.4" fill="none"/></svg></div>
<div class="ph" style="left:544px;top:732px">дверь со стеклом входная уличная</div>
<div class="c" style="left:874px;top:732px">1</div>
<div class="ic" style="left:948px;top:732.2px"><svg width="17" height="13.6" viewBox="0 0 17 13.6"><defs><clipPath id="fc17"><rect x="0" y="0" width="17" height="13.6" rx="2.5"/></clipPath></defs><g clip-path="url(#fc17)"><rect x="0" y="0" width="17" height="13.6" fill="#ffffff"/><rect x="0.5" y="0.5" width="16" height="12.6" rx="2.5" fill="none" stroke="#d6d6d6" stroke-width="1"/><rect x="0" y="3.7" width="17" height="5.1000000000000005" fill="#0c47b7"/><rect x="0" y="8.8" width="17" height="4.799999999999999" fill="#e53b30"/></g></svg></div>
<div class="c" style="left:969px;top:732px">Россия &gt; Томская область</div>
</body></html>
